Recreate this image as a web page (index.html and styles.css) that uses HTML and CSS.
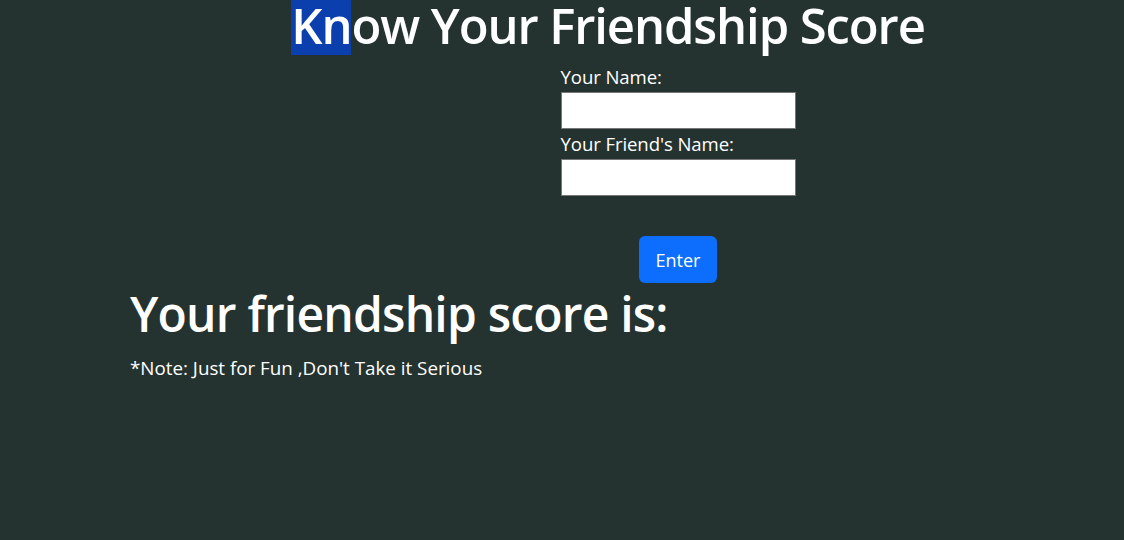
FILE: index.html
```html
<!DOCTYPE html>
<html lang="en">
<head>
<meta charset="utf-8">
<title>Know Your Friendship Score</title>
<link rel="stylesheet" href="styles.css">
</head>
<body>
<header class="title-wrap">
  <h1 class="title"><span class="sel">Kn</span>ow Your Friendship Score</h1>
</header>
<main class="form-wrap">
  <form class="form">
    <label class="label" for="n1">Your Name:</label>
    <input class="field" id="n1" type="text">
    <label class="label" for="n2">Your Friend's Name:</label>
    <input class="field" id="n2" type="text">
    <div class="btn-row"><button class="btn" type="button">Enter</button></div>
  </form>
</main>
<section class="result">
  <h2 class="score">Your friendship score is:</h2>
  <p class="note">*Note: Just for Fun ,Don't Take it Serious</p>
</section>
</body>
</html>
```
FILE: styles.css
```css
html, body {
  margin: 0;
  padding: 0;
}
body {
  background: #253330;
  color: #ffffff;
  font-family: "Open Sans", "Noto Sans", sans-serif;
  height: 540px;
  overflow: hidden;
}
.title-wrap {
  padding-left: 92px;
  text-align: center;
  height: 55px;
}
.title {
  margin: 0;
  font-size: 49px;
  font-weight: 600;
  line-height: 50px;
  letter-spacing: -1.1px;
}
.sel {
  display: inline-block;
  height: 55px;
  background: #0b3fae;
}
.form-wrap {
  padding-left: 232px;
  display: flex;
  justify-content: center;
}
.form {
  width: 235px;
  display: flex;
  flex-direction: column;
  padding-top: 10px;
}
.label {
  font-size: 18.6px;
  line-height: 24px;
  letter-spacing: -0.1px;
}
.field {
  box-sizing: border-box;
  width: 235px;
  height: 37px;
  margin: 3px 0 3px;
  border: 1px solid #767676;
  background: #ffffff;
  padding: 0 4px;
}
.btn-row {
  display: flex;
  justify-content: center;
  padding-top: 37px;
}
.btn {
  font-family: inherit;
  font-size: 18px;
  color: #ffffff;
  background: #0d6efd;
  border: 0;
  border-radius: 6px;
  width: 78px;
  height: 47px;
  padding: 0;
}
.result {
  padding-left: 130px;
  padding-top: 1px;
}
.score {
  margin: 0;
  font-size: 48px;
  font-weight: 600;
  line-height: 60px;
  letter-spacing: -0.8px;
}
.note {
  margin: 12px 0 0;
  font-size: 18.8px;
  line-height: 24px;
}
```
